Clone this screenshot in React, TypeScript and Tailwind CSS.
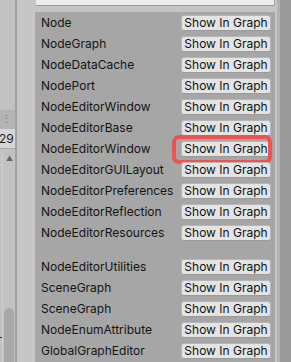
import React from 'react';

const firstGroup = [
  'Node',
  'NodeGraph',
  'NodeDataCache',
  'NodePort',
  'NodeEditorWindow',
  'NodeEditorBase',
  'NodeEditorWindow',
  'NodeEditorGUILayout',
  'NodeEditorPreferences',
  'NodeEditorReflection',
  'NodeEditorResources',
];

const secondGroup = [
  'NodeEditorUtilities',
  'SceneGraph',
  'SceneGraph',
  'NodeEnumAttribute',
  'GlobalGraphEditor',
];

// highlighted row index in the first group (the annotated button)
const HIGHLIGHT = 6;

function ScriptRow({ name, marked }: { name: string; marked?: boolean }) {
  return (
    <div className="relative flex items-center h-[21px] pl-[6px]">
      <span className="text-[12px] leading-none text-[#141414] whitespace-nowrap">{name}</span>
      <button className="ml-auto mr-[4px] w-[90px] h-[16px] shrink-0 rounded-[3px] bg-[#e4e4e4] border border-[#b6b6b6] border-b-[#9a9a9a] flex items-center justify-center text-[12px] leading-none text-[#111]">
        Show In Graph
      </button>
      {marked && (
        <div className="absolute left-[137px] top-[-3px] w-[100px] h-[29px] rounded-[7px] border-[4px] border-[#f0524e]" />
      )}
    </div>
  );
}

export default function App() {
  return (
    <div className="w-[291px] h-[362px] overflow-hidden flex bg-[#c4c4c4] font-['Inter',sans-serif]">
      {/* Left inspector strip */}
      <div className="relative w-[15px] flex flex-col bg-[#c2c2c2]">
        <div className="h-[110px]" />
        <div className="h-[19px] bg-[#b4b4b4] flex items-center pl-[1px] text-[11px] leading-none text-[#777]">⋮</div>
        <div className="h-[20px] bg-[#d6d6d6] border-b border-[#a9a9a9] flex items-center -ml-[1px] text-[12px] leading-none text-[#1a1a1a] overflow-hidden">
          29
        </div>
        <div className="flex-1 flex flex-col border-l border-[#cfcfcf] ml-[2px]">
          <div className="h-[16px] flex items-center justify-center text-[7px] leading-none text-[#666] pt-[2px] pl-[1px]">▲</div>
          <div className="flex-1" />
          <div className="ml-[1px] mr-[1px] h-[54px] rounded-t-[5px] bg-[#a9a9a9]" />
        </div>
        <div className="absolute left-0 top-[337px] w-[2px] h-[1px] bg-[#222]" />
      </div>
      <div className="w-[2px] bg-[#a2a2a2]" />
      <div className="w-[18px] bg-[#c6c6c6]" />

      {/* Main list */}
      <div className="w-[240px] flex flex-col">
        <div className="h-[6px] ml-[1px] bg-[#ececec] border-b border-r border-[#9d9d9d]" />
        <div className="h-[6px]" />
        <div className="flex-1 bg-[#a6a6a6] flex flex-col">
          {firstGroup.map((n, i) => (
            <ScriptRow key={'a' + i} name={n} marked={i === HIGHLIGHT} />
          ))}
          <div className="h-[13px] shrink-0" />
          {secondGroup.map((n, i) => (
            <ScriptRow key={'b' + i} name={n} />
          ))}
        </div>
      </div>

      {/* Right scrollbar edge */}
      <div className="w-[2px] bg-[#c8c8c8]" />
      <div className="w-[3px] bg-[#b2b2b2]" />
      <div className="w-[11px] bg-[#9b9b9b]" />
    </div>
  );
}
